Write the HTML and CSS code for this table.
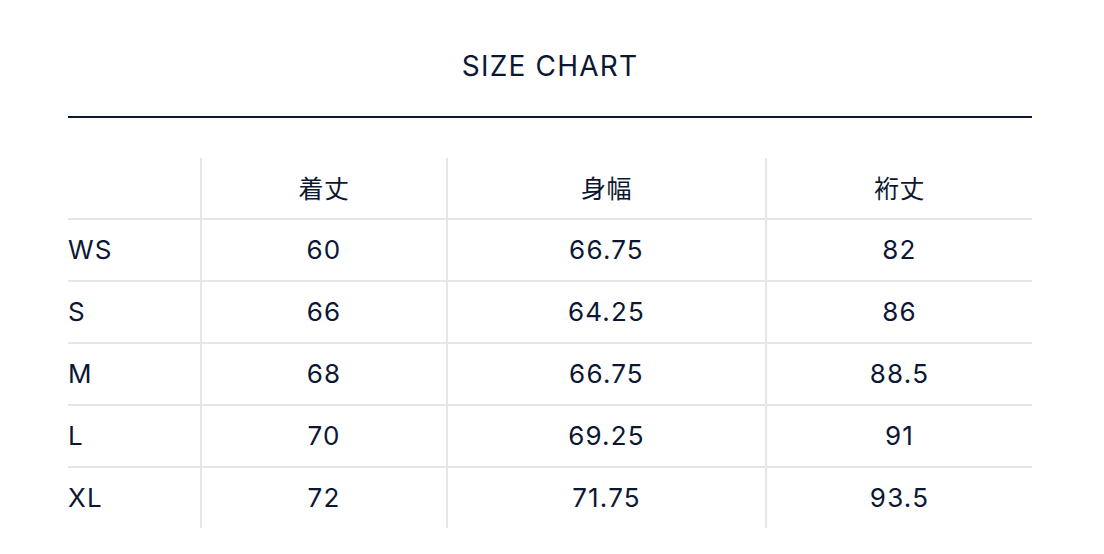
FILE: index.html
```html
<!DOCTYPE html>
<html lang="ja">
<head>
<meta charset="utf-8">
<link rel="stylesheet" href="styles.css">
</head>
<body>
<div class="wrap">
  <h2 class="title">SIZE CHART</h2>
  <div class="rule"></div>
  <table class="chart">
    <colgroup>
      <col class="c1"><col class="c2"><col class="c3"><col class="c4">
    </colgroup>
    <thead>
      <tr><th></th><th>着丈</th><th>身幅</th><th>裄丈</th></tr>
    </thead>
    <tbody>
      <tr><td>WS</td><td>60</td><td>66.75</td><td>82</td></tr>
      <tr><td>S</td><td>66</td><td>64.25</td><td>86</td></tr>
      <tr><td>M</td><td>68</td><td>66.75</td><td>88.5</td></tr>
      <tr><td>L</td><td>70</td><td>69.25</td><td>91</td></tr>
      <tr><td>XL</td><td>72</td><td>71.75</td><td>93.5</td></tr>
    </tbody>
  </table>
</div>
</body>
</html>
```
FILE: styles.css
```css
html, body {
  margin: 0;
  padding: 0;
  background: #ffffff;
}
body {
  font-family: Inter, "Noto Sans CJK JP", sans-serif;
  color: #0b1733;
}
.wrap {
  width: 964px;
  margin-left: 68px;
}
.title {
  margin: 0;
  padding-top: 46px;
  height: 70px;
  box-sizing: border-box;
  line-height: 40px;
  font-size: 28px;
  font-weight: 400;
  text-align: center;
  letter-spacing: 1.2px;
}
.rule {
  height: 2px;
  background: #0b1733;
  margin-top: 46px;
}
.chart {
  margin-top: 40px;
  width: 964px;
  border-collapse: collapse;
  table-layout: fixed;
  font-size: 26px;
  letter-spacing: 1.2px;
}
.c1 { width: 133px; }
.c2 { width: 246px; }
.c3 { width: 319px; }
.c4 { width: 266px; }
.chart th, .chart td {
  padding: 0;
  height: 60px;
  text-align: center;
  font-weight: 400;
  vertical-align: middle;
}
.chart td {
  padding-bottom: 2px;
  height: 58px;
}
.chart th {
  height: 57px;
  font-size: 25px;
  letter-spacing: 0.5px;
  padding-bottom: 3px;
}
.chart th + th, .chart td + td {
  border-left: 2px solid #e6e6e6;
}
.chart td:first-child, .chart th:first-child {
  text-align: left;
}
.chart tbody tr {
  border-top: 2px solid #e6e6e6;
}
```
